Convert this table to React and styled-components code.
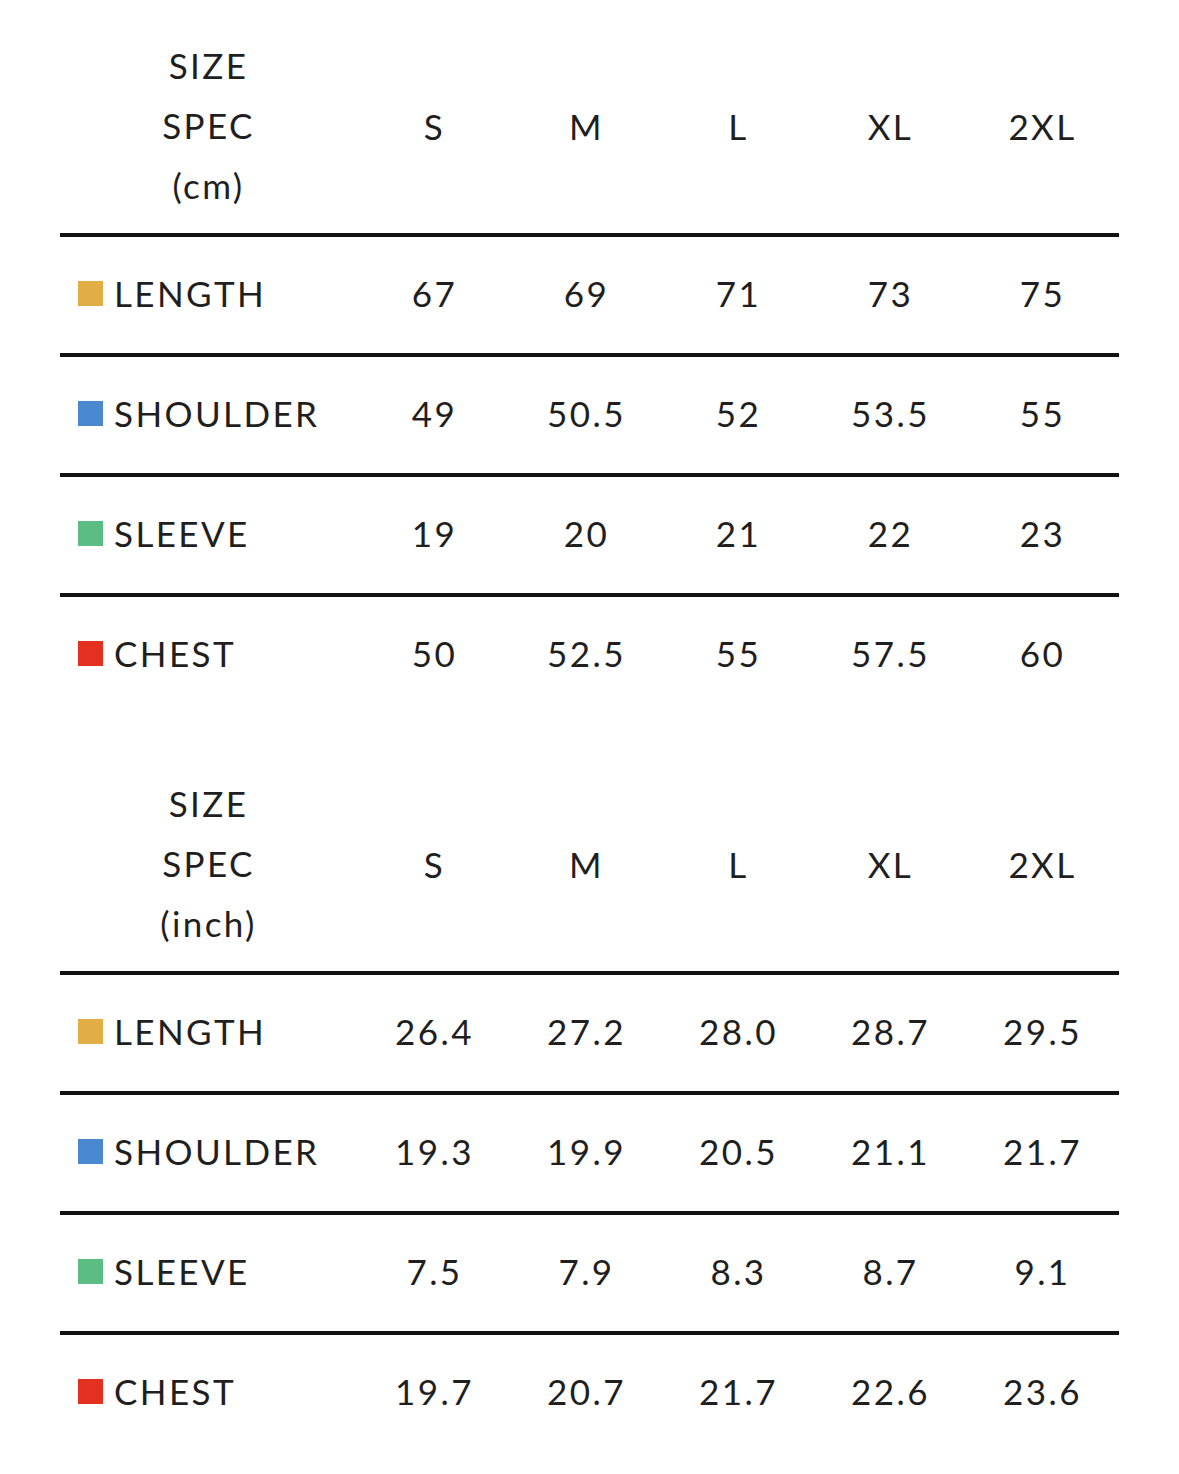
import React from 'react'
import styled, { createGlobalStyle } from 'styled-components'

const GlobalStyle = createGlobalStyle`
  html, body {
    margin: 0;
    padding: 0;
    background: #fff;
  }
  body {
    font-family: Lato, "Noto Sans", "Liberation Sans", sans-serif;
    color: #1f1f1f;
  }
`

const sizes = ['S', 'M', 'L', 'XL', '2XL']

const tables = [
  {
    unit: '(cm)',
    rows: [
      { name: 'LENGTH', color: '#e2ad45', values: ['67', '69', '71', '73', '75'] },
      { name: 'SHOULDER', color: '#4a88cf', values: ['49', '50.5', '52', '53.5', '55'] },
      { name: 'SLEEVE', color: '#5bbd82', values: ['19', '20', '21', '22', '23'] },
      { name: 'CHEST', color: '#e3301f', values: ['50', '52.5', '55', '57.5', '60'] },
    ],
  },
  {
    unit: '(inch)',
    rows: [
      { name: 'LENGTH', color: '#e2ad45', values: ['26.4', '27.2', '28.0', '28.7', '29.5'] },
      { name: 'SHOULDER', color: '#4a88cf', values: ['19.3', '19.9', '20.5', '21.1', '21.7'] },
      { name: 'SLEEVE', color: '#5bbd82', values: ['7.5', '7.9', '8.3', '8.7', '9.1'] },
      { name: 'CHEST', color: '#e3301f', values: ['19.7', '20.7', '21.7', '22.6', '23.6'] },
    ],
  },
]

const Page = styled.div`
  display: flex;
  flex-direction: column;
  gap: 61px;
  padding: 36px 0 22px 60px;
`

const Table = styled.div`
  width: 1059px;
`

const Row = styled.div`
  display: grid;
  grid-template-columns: 297px repeat(5, 152px);
  align-items: center;
  font-size: 35px;
  letter-spacing: 2.4px;
  font-weight: 400;
`

const HeadRow = styled(Row)`
  height: 180px;
  margin-bottom: 17px;
`

const BodyRow = styled(Row)`
  height: 112px;
  padding-bottom: 4px;
  border-top: 4px solid #111;
`

const SpecLabel = styled.div`
  display: flex;
  flex-direction: column;
  align-items: center;
  line-height: 60px;
  margin-top: -2px;
`

const Cell = styled.div`
  text-align: center;
  line-height: 40px;
  padding-left: 3px;
`

const Label = styled.div`
  display: flex;
  align-items: center;
  gap: 11px;
  padding-left: 18px;
  line-height: 40px;
`

const Swatch = styled.span`
  width: 25px;
  height: 25px;
  flex: none;
  background: ${(p) => p.$color};
`

const SizeTable = ({ unit, rows }) => (
  <Table>
    <HeadRow>
      <SpecLabel>
        <span>SIZE</span>
        <span>SPEC</span>
        <span>{unit}</span>
      </SpecLabel>
      {sizes.map((s) => (
        <Cell key={s}>{s}</Cell>
      ))}
    </HeadRow>
    {rows.map((r) => (
      <BodyRow key={r.name}>
        <Label>
          <Swatch $color={r.color} />
          {r.name}
        </Label>
        {r.values.map((v, i) => (
          <Cell key={i}>{v}</Cell>
        ))}
      </BodyRow>
    ))}
  </Table>
)

export default function App() {
  return (
    <>
      <GlobalStyle />
      <Page>
        {tables.map((t) => (
          <SizeTable key={t.unit} unit={t.unit} rows={t.rows} />
        ))}
      </Page>
    </>
  )
}
